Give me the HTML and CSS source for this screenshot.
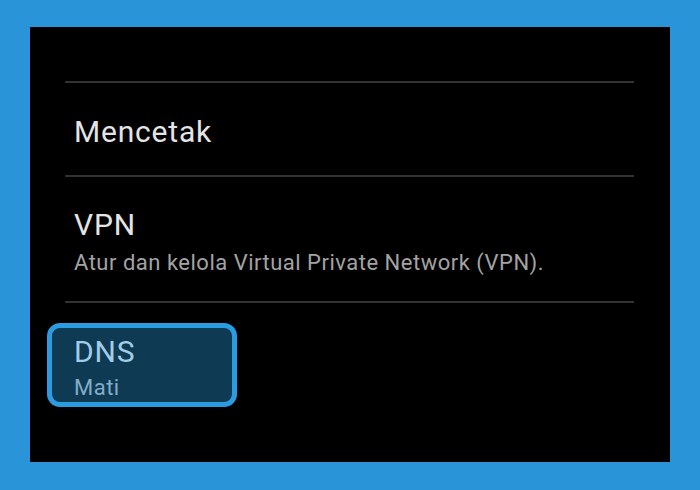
FILE: index.html
```html
<!DOCTYPE html>
<html>
<head>
  <title>Setelan Jaringan</title>
  <link rel="stylesheet" href="styles.css">
</head>
<body>
  <div class="panel">
    <div class="item item-print">
      <div class="title">Mencetak</div>
    </div>
    <div class="item item-vpn">
      <div class="title">VPN</div>
      <div class="summary">Atur dan kelola Virtual Private Network (VPN).</div>
    </div>
    <div class="item item-dns">
      <div class="focus">
        <div class="title">DNS</div>
        <div class="summary">Mati</div>
      </div>
    </div>
  </div>
</body>
</html>
```

FILE: styles.css
```css
html, body {
  margin: 0;
  height: 100%;
}

body {
  background-color: #2994d8;
  padding: 27px 30px 0;
  box-sizing: border-box;
  font-family: Roboto, "Noto Sans", sans-serif;
}

.panel {
  height: 435px;
  background-color: #000;
  padding: 54px 36px 0 35px;
  box-sizing: border-box;
}

.item {
  border-top: 2px solid #333;
  padding-left: 9px;
}

.title {
  font-size: 30px;
  line-height: 36px;
  letter-spacing: 0.8px;
  color: #e4e4e4;
}

.summary {
  font-size: 22px;
  line-height: 26px;
  letter-spacing: 0.5px;
  color: #a3a3a3;
}

.item-print {
  padding-top: 31px;
  padding-bottom: 25px;
}

.item-vpn {
  padding-top: 30px;
  padding-bottom: 25px;
}

.item-vpn .summary {
  margin-top: 7px;
}

.item-dns {
  padding-top: 20px;
  padding-left: 0;
}

.focus {
  width: 190px;
  height: 84px;
  margin-left: -18px;
  padding: 6px 0 0 22px;
  box-sizing: border-box;
  border: 5px solid #2a9de2;
  border-radius: 13px;
  background-color: #0f3a53;
}

.focus .title {
  color: #a2cde8;
}

.focus .summary {
  margin-top: 5px;
  color: #82adc9;
}
```
